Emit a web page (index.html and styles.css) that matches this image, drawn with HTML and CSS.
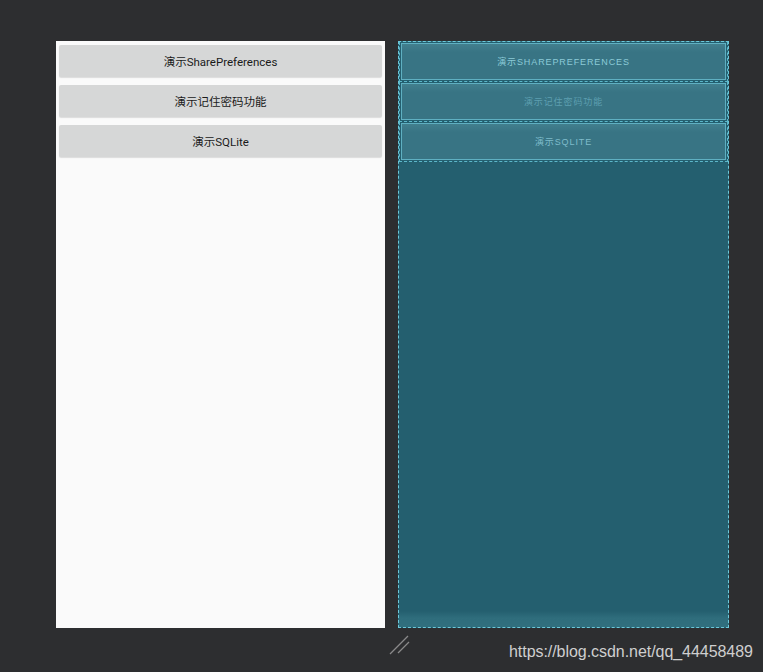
FILE: index.html
```html
<!DOCTYPE html>
<html>
<head>
<meta charset="utf-8">
<link rel="stylesheet" href="styles.css">
</head>
<body>
<div class="stage">
  <div class="design">
    <div class="btn">演示SharePreferences</div>
    <div class="btn">演示记住密码功能</div>
    <div class="btn">演示SQLite</div>
  </div>
  <div class="blueprint">
    <div class="bp-row"><div class="bp-btn bright">演示SHAREPREFERENCES</div></div>
    <div class="bp-row"><div class="bp-btn dim">演示记住密码功能</div></div>
    <div class="bp-row"><div class="bp-btn">演示SQLITE</div></div>
    <div class="bp-rest"></div>
  </div>
</div>
<svg class="handle" width="24" height="24" viewBox="0 0 24 24">
  <line x1="1" y1="21" x2="19" y2="3" stroke="#8a8a8a" stroke-width="1.3"/>
  <line x1="9" y1="20" x2="20" y2="9" stroke="#8a8a8a" stroke-width="1.3"/>
</svg>
<div class="watermark">https://blog.csdn.net/qq_44458489</div>
</body>
</html>
```
FILE: styles.css
```css
html, body {
  margin: 0;
  padding: 0;
}
body {
  background: #2d2e30;
  width: 763px;
  height: 672px;
  overflow: hidden;
  position: relative;
  font-family: Roboto, "Noto Sans CJK SC", sans-serif;
}
.stage {
  display: flex;
  gap: 13px;
  padding: 41px 0 0 56px;
}
.design {
  width: 323px;
  height: 579px;
  background: #fafafa;
  padding: 4px 3px;
  display: flex;
  flex-direction: column;
  gap: 8px;
}
.btn {
  height: 32px;
  background: #d6d7d7;
  border-radius: 2px;
  box-shadow: 0 1px 1px rgba(0,0,0,0.12);
  display: flex;
  align-items: center;
  justify-content: center;
  font-size: 11.5px;
  color: #1a1a1a;
}
.blueprint {
  width: 329px;
  height: 585px;
  background: linear-gradient(to bottom, #245f6f 0, #245f6f 569px, #2f6d7c 576px, #316f7e 585px);
  border: 1px dashed #6cc8da;
  display: flex;
  flex-direction: column;
}
.bp-row {
  box-sizing: border-box;
  height: 40px;
  border: 1px dashed #5cb7ca;
  border-top: none;
  padding: 1px;
  display: flex;
}
.bp-btn {
  flex: 1;
  background: linear-gradient(to bottom, #427f8e 0, #387484 8px, #387484 100%);
  border: 1px solid #5fb0c2;
  display: flex;
  align-items: center;
  justify-content: center;
  font-family: "Liberation Sans", "Noto Sans CJK SC", sans-serif;
  font-size: 9px;
  letter-spacing: 0.9px;
  color: #7fbccb;
}
.bp-btn.bright { color: #8ccbd8; }
.bp-btn.dim { color: #5d9fb0; }
.bp-rest {
  flex: 1;
}
.handle {
  position: absolute;
  left: 389px;
  top: 633px;
}
.watermark {
  position: absolute;
  left: 509px;
  top: 643px;
  font-family: "Liberation Sans", Arial, sans-serif;
  font-size: 16px;
  color: #cfcfcf;
  letter-spacing: -0.05px;
}
```
